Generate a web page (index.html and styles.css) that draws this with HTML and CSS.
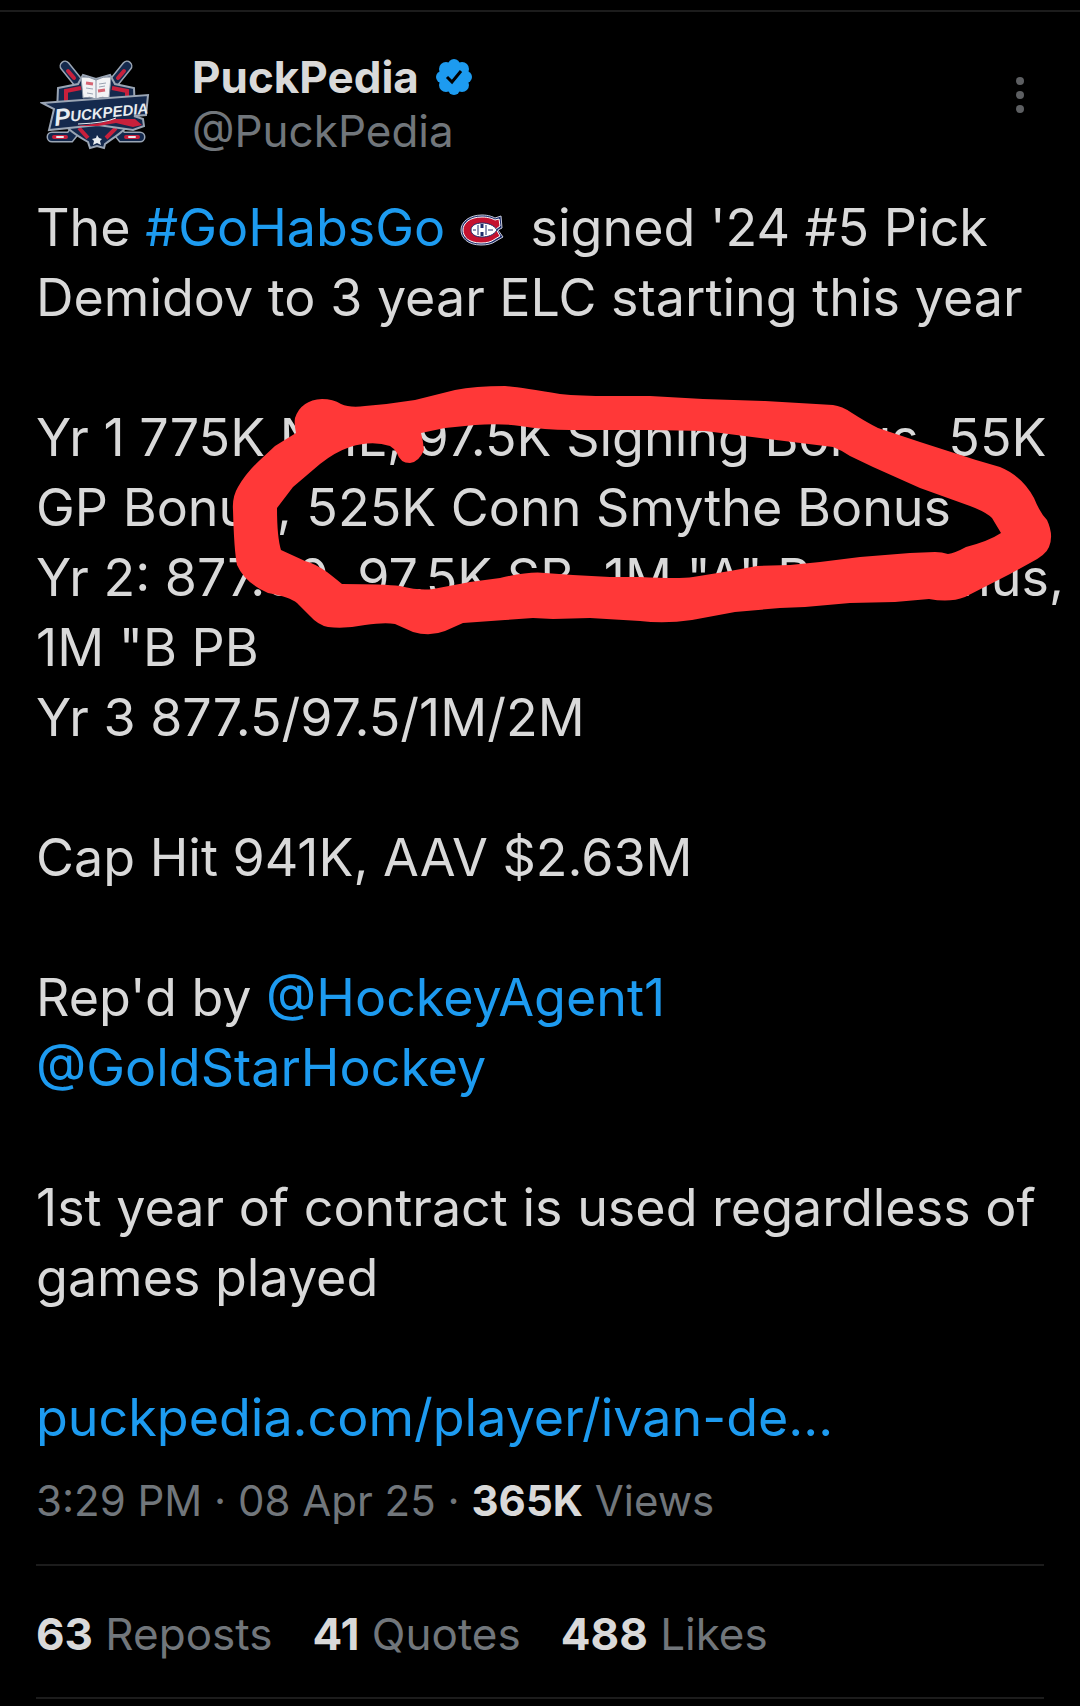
FILE: index.html
```html
<!DOCTYPE html>
<html lang="en">
<head>
    <meta charset="UTF-8">
    <meta name="viewport" content="width=device-width, initial-scale=1.0">
    <title>PuckPedia on X</title>
    <link rel="stylesheet" href="styles.css">
</head>

<body>
    <article class="post">
        <header class="post-header">
            <svg class="avatar" viewBox="10 15 114 100" role="img" aria-label="PuckPedia logo">
                <!-- crossed sticks -->
                <g stroke-linecap="round" fill="none">
                    <path d="M35 26 L92 97 H110 M97 26 L40 97 H22" stroke="#9aa5b4" stroke-width="11"/>
                    <path d="M35 26 L92 97 H110 M97 26 L40 97 H22" stroke="#14294d" stroke-width="8"/>
                    <path d="M38 31 L44 38 M94 31 L88 38 M24 97 H36 M96 97 H108" stroke="#c8203c" stroke-width="4"/>
                    <path d="M27 97 h6 M99 97 h6" stroke="#e8ecf0" stroke-width="2"/>
                </g>
                <!-- shield -->
                <path d="M28 48 L48 44 L53 35 L66 39 L80 35 L85 44 L104 48 L105 72 C101 88 87 95 75 104 L74 108 L67 106 L60 108 L58 102 C44 94 32 86 27 72Z" fill="#14294d" stroke="#9aa5b4" stroke-width="2"/>
                <path d="M36 64 V51 L51 48 M97 64 V51 L82 48" fill="none" stroke="#c8203c" stroke-width="4"/>
                <path d="M49 88 L58 98 M86 88 L76 98" stroke="#c8203c" stroke-width="4"/>
                <!-- book -->
                <path d="M51 37 Q59 36 66 40 Q73 36 81 37 L79 58 Q72 56 66 59 Q60 56 53 58Z" fill="#f2f3f5" stroke="#8792a3" stroke-width="1"/>
                <path d="M66 40 V58" stroke="#8792a3" stroke-width="1"/>
                <path d="M56 43 l7 1 M68 51 l7 -1" stroke="#d66472" stroke-width="3"/>
                <path d="M56 48 l7 1 M57 53 l6 1 M69 44 l7 -1 M69 47 l6 -1" stroke="#9aa3b2" stroke-width="1"/>
                <!-- name banner -->
                <path d="M12 63 L118 55 L116 75 L104 76 L113 79 L114 86 L103 90 L68 85 L19 90 L24 69Z" fill="#14294d" stroke="#9aa5b4" stroke-width="2"/>
                <path d="M46 86 Q72 84 84 79 L105 79 L112 85 L103 87 L86 83 L68 86Z" fill="#c8203c"/>
                <path d="M48 84 Q75 83 86 78" fill="none" stroke="#e8ecf0" stroke-width="1"/>
                <text class="avatar-text" transform="rotate(-6 26 85)" x="25" y="86"><tspan font-size="24">P</tspan><tspan font-size="15" dy="-3">UCKPEDIA</tspan></text>
                <path d="M67 95 L69 98 L72 99 L70 101 L71 105 L67 103 L63 105 L64 101 L62 99 L66 98Z" fill="#e8ecf0"/>
            </svg>
            <div class="author">
                <div class="author-name">
                    <h1>PuckPedia</h1>
                    <svg class="verified" viewBox="0 0 38 38" role="img" aria-label="Verified account">
                        <g fill="#1d9bf0">
                            <circle cx="19" cy="19" r="15"/>
                            <circle cx="19" cy="7" r="6"/>
                            <circle cx="27" cy="11" r="7"/>
                            <circle cx="31" cy="19" r="6"/>
                            <circle cx="27" cy="27" r="7"/>
                            <circle cx="19" cy="31" r="6"/>
                            <circle cx="11" cy="27" r="7"/>
                            <circle cx="7" cy="19" r="6"/>
                            <circle cx="11" cy="11" r="7"/>
                        </g>
                        <path d="M12 19 L17 24 L26 13" fill="none" stroke="#000" stroke-width="3"/>
                    </svg>
                </div>
                <a class="handle" href="#">@PuckPedia</a>
            </div>
            <button class="menu-btn" type="button" aria-label="More options">
                <svg viewBox="0 0 8 36"><circle cx="4" cy="4" r="4"/><circle cx="4" cy="18" r="4"/><circle cx="4" cy="32" r="4"/></svg>
            </button>
        </header>

        <div class="post-body">
            <p>The <a href="#">#GoHabsGo</a> <svg class="team-icon" viewBox="0 0 44 32" role="img" aria-label="Canadiens">
                    <path d="M22 1 C29 1 33 3 35 4 L41 2 L42 14 L38 16 L43 23 L36 27 C32 30 27 31 21 31 C8 31 1 24 1 16 C1 8 9 1 22 1Z" fill="#1d2d6b" stroke="#c9cddd" stroke-width="1"/>
                    <path d="M22 3 C29 3 33 5 35 6 L39 5 L40 12 L36 15 L40 22 L35 25 C31 28 27 29 21 29 C9 29 3 23 3 16 C3 9 10 3 22 3Z" fill="#c4122f" stroke="#fff" stroke-width="1"/>
                    <path d="M37 16 C34 21 28 23 22 23 C15 23 11 20 11 16 C11 12 15 9 22 9 C28 9 34 11 37 16Z" fill="#fff" stroke="#1d2d6b" stroke-width="1"/>
                    <path d="M18 11 V21 M26 11 V21 M13 16 H16 M28 16 H33" stroke="#1d2d6b" stroke-width="1"/>
                    <path d="M22 10 V14 M22 18 V22" stroke="#1d2d6b" stroke-width="3"/>
                </svg> signed '24 #5 Pick<br>Demidov to 3 year ELC starting this year</p>
            <p>Yr 1 775K NHL, 97.5K Signing Bonus, 55K<br>GP Bonus, 525K Conn Smythe Bonus<br>Yr 2: 877.50, 97.5K SB, 1M "A" Perf Bonus,<br>1M "B PB<br>Yr 3 877.5/97.5/1M/2M</p>
            <p>Cap Hit 941K, AAV $2.63M</p>
            <p>Rep'd by <a href="#">@HockeyAgent1</a><br><a href="#">@GoldStarHockey</a></p>
            <p>1st year of contract is used regardless of<br>games played</p>
            <p><a href="#">puckpedia.com/player/ivan-de…</a></p>

            <!-- marker circle round the Conn Smythe bonus -->
            <svg class="marker" viewBox="226 380 832 260" aria-hidden="true">
                <path fill-rule="evenodd" d="M296 433 Q294 424 295 418 Q301 400 322 399 Q333 399 341 404 Q350 408 365 406 Q390 404 415 400 L455 390 Q475 386 505 386 Q520 387 560 394 Q580 396 610 396 L650 396 L703 399 L765 401 L833 405 Q842 406 852 413 Q866 422 878 428 L920 442 L976 460 L1000 467 Q1022 476 1034 498 Q1040 513 1047 520 Q1054 535 1049 547 Q1046 555 1030 563 L1010 574 L965 597 Q950 603 929 599 L895 602 L850 603 L805 607 L780 608 L735 612 L692 620 Q665 624 640 621 L590 618 L553 619 L533 618 L505 620 L463 623 L445 631 Q430 637 413 632 L395 624 Q385 622 365 625 Q345 629 328 627 Q318 625 310 616 L297 603 Q290 597 268 593 Q245 583 237 565 Q234 550 233 510 Q232 497 238 487 Q246 473 260 460 L275 446Z
                    M421 433 L445 428 L475 425 Q500 423 520 426 Q545 430 570 430 L650 430 L705 431 L760 438 L833 447 Q841 450 850 456 L873 467 L920 488 L970 506 Q986 512 992 518 L1001 533 Q989 541 966 547 Q955 553 948 554 Q942 552 935 552 L910 553 L860 557 L820 562 L790 565 L757 566 L730 571 L693 577 Q680 579 640 577 L610 577 L573 575 L545 573 Q530 571 500 578 L470 582 L433 589 Q420 591 400 586 Q385 584 342 584 Q336 579 327 572 Q316 564 305 561 L281 550 Q277 537 277 508 L293 487 L320 464 Q335 452 350 447 Q372 440 390 446 Q395 449 397 453 Q400 463 410 463 Q419 462 424 450 Q423 440 421 433Z"/>
            </svg>
        </div>

        <p class="meta"><time datetime="2025-04-08T15:29">3:29 PM · 08 Apr 25</time> · <strong>365K</strong> Views</p>

        <footer class="stats">
            <a href="#"><strong>63</strong> Reposts</a>
            <a href="#"><strong>41</strong> Quotes</a>
            <a href="#"><strong>488</strong> Likes</a>
        </footer>
    </article>
</body>
</html>
```
FILE: styles.css
```css
* {
    box-sizing: border-box;
}

body {
    font-family: Inter, "Liberation Sans", sans-serif;
    background-color: #000;
    color: #d9d9d9;
    margin: 0;
    padding-top: 10px;
}

a {
    color: #1d9bf0;
    text-decoration: none;
}

.post {
    border-top: 2px solid #1c1c1c;
    padding: 38px 36px 0;
}

.post-header {
    display: flex;
    align-items: flex-start;
    height: 143px;
}

.avatar {
    width: 114px;
    height: 100px;
    margin: 5px 38px 0 4px;
}

.avatar-text {
    font-family: "Liberation Sans", sans-serif;
    font-weight: bold;
    font-style: italic;
    fill: #e8ecf0;
}

.author {
    flex: 1;
    font-size: 44px;
    line-height: 54px;
}

.author-name {
    display: flex;
    align-items: center;
    gap: 16px;
}

.author-name h1 {
    font-size: 44px;
    font-weight: 700;
    margin: 0;
}

.verified {
    width: 38px;
    height: 38px;
}

.handle {
    color: #71767b;
}

.menu-btn {
    background: none;
    border: 0;
    padding: 27px 20px;
    cursor: pointer;
}

.menu-btn svg {
    display: block;
    width: 8px;
    height: 36px;
    fill: #5d5f62;
}

.post-body {
    position: relative;
    font-size: 52px;
    line-height: 70px;
    white-space: nowrap;
}

.post-body p {
    margin: 0 0 70px;
}

.post-body p:last-of-type {
    margin-bottom: 0;
}

.team-icon {
    width: 44px;
    height: 32px;
    margin-right: 12px;
}

/* drawn over the text */
.marker {
    position: absolute;
    left: 190px;
    top: 187px;
    width: 832px;
    height: 260px;
    fill: #ff3838;
}

.meta {
    color: #71767b;
    font-size: 42px;
    line-height: 54px;
    margin: 0;
    padding: 21px 0 36px;
    border-bottom: 2px solid #1c1c1c;
}

.meta strong,
.stats strong {
    color: #d9d9d9;
}

.stats {
    display: flex;
    gap: 40px;
    font-size: 44px;
    line-height: 54px;
    padding: 41px 0 36px;
    border-bottom: 2px solid #1c1c1c;
}

.stats a {
    color: #71767b;
}
```
